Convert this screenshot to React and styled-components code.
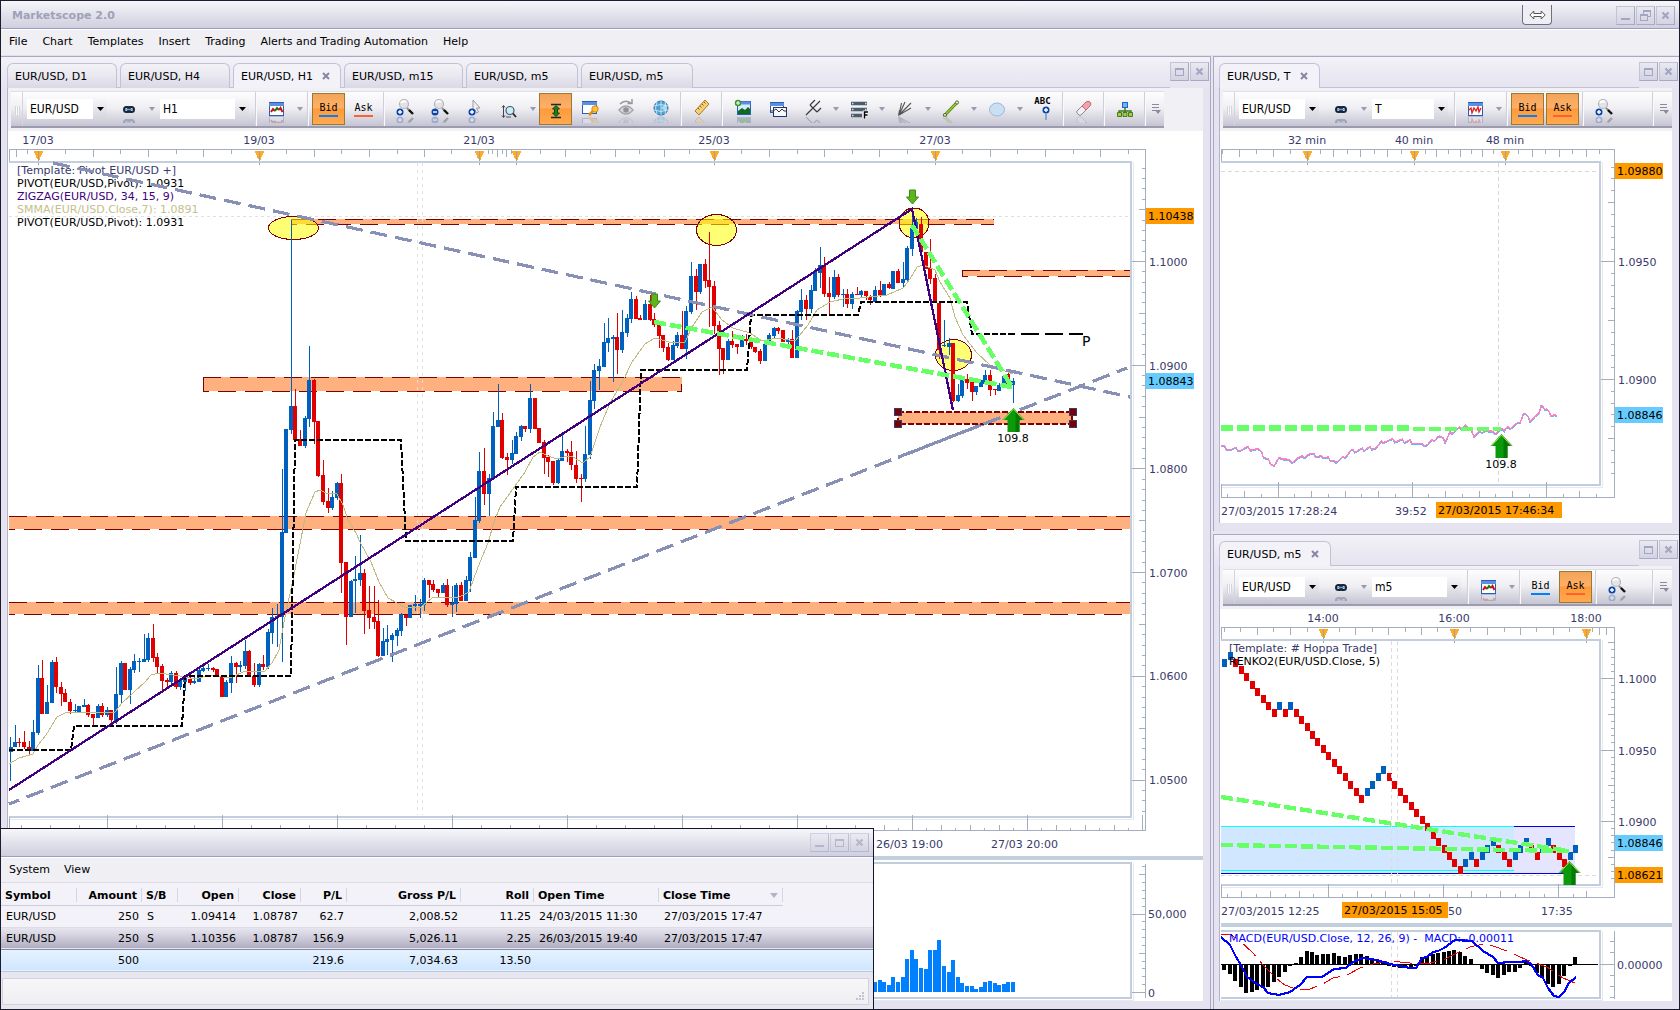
import React, { useState } from "react";
import styled, { createGlobalStyle, css } from "styled-components";

const BLUE = "#0060c0";
const RED = "#e00000";
const AXIS = "#a5aebc";
const FRAME = "#c2cedb";
const LABEL = "#39396b";
const GREEN = "#66ff66";
const MAROON = "#7d0000";
const TREND = "#8890b6";

// [high, bodyTop, bodyBottom, low, up]
const CANDLES = [
  [737, 747, 752, 781, 1], [725, 742, 747, 747, 1], [738, 742, 743, 747, 0], [731, 742, 747, 749, 0],
  [741, 747, 751, 755, 0], [720, 732, 751, 751, 1], [665, 678, 733, 735, 1], [660, 678, 714, 714, 0],
  [685, 702, 714, 714, 1], [660, 662, 703, 703, 1], [657, 662, 687, 693, 0], [682, 687, 694, 706, 0],
  [689, 693, 702, 702, 0], [699, 702, 711, 714, 0], [704, 710, 711, 713, 1], [706, 706, 712, 713, 1],
  [699, 705, 707, 707, 1], [704, 705, 715, 717, 0], [714, 714, 718, 726, 0], [704, 706, 718, 718, 1],
  [703, 706, 715, 717, 0], [707, 710, 715, 717, 1], [710, 710, 720, 723, 0], [667, 694, 721, 724, 1],
  [661, 663, 695, 703, 1], [663, 663, 690, 690, 0], [667, 669, 690, 704, 1], [654, 661, 670, 673, 1],
  [658, 661, 662, 672, 1], [634, 659, 662, 662, 1], [633, 638, 660, 662, 1], [624, 638, 658, 662, 0],
  [653, 657, 667, 673, 0], [664, 666, 681, 690, 0], [678, 680, 682, 687, 0], [671, 673, 682, 685, 1],
  [671, 673, 687, 689, 0], [678, 680, 687, 690, 1], [677, 678, 682, 691, 1], [677, 679, 683, 685, 0],
  [677, 681, 683, 684, 1], [668, 670, 682, 682, 1], [663, 668, 671, 672, 1], [664, 668, 669, 671, 1],
  [667, 668, 670, 672, 0], [669, 669, 676, 676, 0], [676, 676, 697, 697, 0], [680, 682, 697, 697, 1],
  [656, 663, 683, 693, 1], [662, 663, 667, 683, 0], [661, 665, 667, 672, 1], [640, 651, 666, 669, 1],
  [650, 651, 676, 676, 0], [663, 676, 685, 687, 0], [663, 664, 685, 687, 1], [655, 664, 667, 670, 0],
  [629, 632, 667, 669, 1], [608, 617, 633, 644, 1], [604, 616, 618, 647, 1], [469, 532, 617, 662, 1],
  [429, 429, 533, 533, 1], [220, 406, 430, 434, 1], [389, 406, 440, 441, 0], [430, 439, 446, 446, 0],
  [416, 418, 446, 448, 1], [346, 380, 419, 427, 1], [379, 380, 422, 444, 0], [421, 421, 476, 477, 0],
  [460, 475, 502, 505, 0], [488, 501, 508, 513, 0], [491, 497, 508, 510, 1], [482, 483, 498, 500, 1],
  [474, 483, 563, 593, 0], [562, 562, 617, 645, 0], [580, 581, 617, 617, 1], [556, 579, 581, 613, 1],
  [535, 573, 580, 586, 1], [569, 573, 611, 634, 0], [586, 610, 618, 629, 0], [586, 617, 622, 629, 0],
  [600, 621, 656, 657, 0], [628, 641, 656, 656, 1], [625, 639, 642, 655, 1], [633, 635, 640, 662, 1],
  [628, 630, 636, 646, 1], [613, 614, 631, 636, 1], [615, 615, 618, 626, 0], [605, 605, 618, 618, 1],
  [595, 604, 606, 611, 1], [599, 604, 606, 618, 1], [578, 580, 605, 611, 1], [580, 580, 585, 598, 0],
  [580, 584, 590, 592, 0], [589, 589, 593, 597, 0], [583, 585, 593, 593, 1], [579, 585, 605, 607, 0],
  [586, 603, 605, 617, 1], [583, 585, 604, 612, 1], [582, 585, 601, 601, 0], [576, 580, 601, 601, 1],
  [552, 557, 581, 592, 1], [497, 520, 558, 558, 1], [452, 471, 521, 523, 1], [448, 471, 494, 505, 0],
  [474, 478, 494, 516, 1], [412, 426, 479, 479, 1], [384, 420, 427, 427, 1], [413, 420, 458, 459, 0],
  [453, 457, 460, 475, 0], [440, 453, 460, 464, 1], [432, 436, 454, 454, 1], [425, 426, 437, 441, 1],
  [426, 426, 429, 432, 0], [384, 398, 429, 433, 1], [398, 398, 429, 429, 0], [428, 428, 443, 443, 0],
  [440, 442, 458, 474, 0], [455, 457, 462, 477, 0], [461, 461, 483, 485, 0], [459, 460, 483, 484, 1],
  [435, 451, 461, 461, 1], [449, 451, 453, 462, 0], [441, 452, 465, 470, 0], [451, 465, 479, 483, 0],
  [474, 478, 479, 502, 0], [426, 454, 479, 482, 1], [381, 400, 455, 459, 1], [364, 370, 401, 409, 1],
  [359, 366, 371, 390, 1], [323, 342, 367, 367, 1], [318, 338, 343, 352, 1], [335, 337, 339, 382, 1],
  [313, 337, 350, 374, 0], [310, 332, 350, 353, 1], [314, 318, 333, 337, 1], [292, 299, 319, 323, 1],
  [296, 299, 319, 319, 0], [315, 318, 320, 320, 0], [300, 304, 320, 320, 1], [295, 304, 320, 321, 0],
  [313, 319, 325, 327, 0], [325, 325, 336, 348, 0], [335, 335, 348, 352, 0], [343, 347, 360, 361, 0],
  [341, 345, 360, 360, 1], [332, 335, 346, 348, 1], [311, 335, 349, 349, 0], [306, 311, 349, 359, 1],
  [262, 276, 312, 314, 1], [269, 276, 292, 310, 0], [264, 264, 292, 294, 1], [259, 264, 281, 288, 0],
  [232, 280, 287, 327, 0], [281, 286, 326, 334, 0], [321, 325, 349, 375, 0], [348, 348, 360, 374, 0],
  [339, 341, 360, 360, 1], [331, 341, 345, 348, 0], [344, 344, 347, 354, 0], [335, 340, 347, 347, 1],
  [334, 339, 341, 345, 0], [341, 341, 347, 349, 0], [347, 347, 352, 353, 0], [349, 351, 361, 364, 0],
  [344, 344, 361, 361, 1], [333, 335, 345, 345, 1], [327, 328, 336, 338, 1], [327, 328, 331, 334, 0],
  [330, 330, 342, 342, 0], [338, 340, 342, 344, 1], [330, 339, 358, 358, 0], [310, 311, 358, 358, 1],
  [289, 300, 312, 320, 1], [295, 300, 309, 320, 0], [285, 290, 309, 313, 1], [268, 272, 291, 291, 1],
  [247, 265, 273, 288, 1], [257, 265, 294, 297, 0], [277, 293, 297, 314, 0], [270, 277, 297, 299, 1],
  [274, 277, 295, 297, 0], [289, 294, 295, 307, 1], [289, 294, 304, 308, 0], [292, 294, 304, 309, 1],
  [287, 294, 295, 295, 0], [290, 291, 295, 297, 1], [291, 291, 296, 300, 0], [295, 297, 300, 305, 0],
  [286, 290, 302, 302, 1], [281, 290, 295, 297, 0], [284, 284, 295, 295, 1], [282, 284, 288, 289, 0],
  [271, 271, 289, 289, 1], [269, 271, 283, 283, 0], [262, 279, 283, 287, 1], [246, 248, 280, 282, 1],
  [210, 228, 249, 256, 1], [218, 222, 229, 232, 1], [217, 224, 252, 252, 0], [252, 252, 269, 269, 0],
  [239, 268, 279, 284, 0], [274, 278, 303, 303, 0], [303, 303, 350, 359, 0], [320, 345, 346, 347, 1],
  [338, 343, 347, 355, 1], [343, 343, 401, 402, 0], [384, 395, 401, 402, 1], [380, 380, 396, 398, 1],
  [374, 379, 383, 389, 0], [379, 382, 392, 401, 0], [386, 386, 392, 395, 1], [380, 380, 387, 387, 1],
  [370, 375, 384, 384, 1], [370, 375, 390, 396, 0], [389, 389, 390, 395, 0], [383, 385, 391, 391, 1],
  [375, 376, 386, 386, 1], [373, 374, 384, 386, 0], [378, 381, 385, 403, 1],
];

const VOLUME = [
  982, 980, 982, 985, 977, 982, 977, 959, 950, 959, 968, 969, 950, 950, 940, 966,
  972, 960, 977, 983, 986, 986, 989, 987, 982, 981, 983, 985, 984, 982, 982,
];

const SMMA =
  "9,764 19,758 33,754 38,745 46,735 57,717 67,712 92,712 115,712 122,703 134,692 145,682 151,675 159,673 180,676 195,679 210,675 230,678 245,671 264,672 272,663 279,650 285,617 293,580 306,513 308,508 315,492 320,490 326,493 337,494 343,505 348,520 356,533 360,542 371,562 379,582 388,598 406,608 421,607 432,598 459,597 469,592 474,578 480,562 488,543 494,522 500,507 510,493 525,472 533,457 540,452 548,456 557,459 567,456 573,457 583,463 590,457 600,427 610,403 622,383 632,362 645,344 655,338 673,343 685,342 692,327 702,312 712,307 722,320 733,328 750,333 762,341 777,338 795,341 808,325 817,310 830,302 847,298 860,298 887,295 903,288 910,279 917,267 923,265 935,270 940,282 950,298 955,317 963,335 977,353 990,365 1013,374";

const PIVOT =
  "9,750 71,750 74,726 182,726 185,676 291,676 295,440 401,440 406,541 513,541 516,487 637,487 641,370 747,370 751,315 858,315 861,302 967,302 972,334 1013,334";

const TICKS_LINE = [
  [0, 76], [9, 79], [19, 79], [27, 78], [39, 81], [44, 88], [53, 95], [60, 87], [69, 92], [79, 88], [89, 84],
  [102, 87], [115, 91], [122, 88], [130, 81], [145, 79], [155, 77], [164, 70], [189, 71], [199, 75], [207, 74],
  [219, 65], [224, 71], [229, 63], [244, 56], [249, 59], [253, 66], [265, 59], [272, 63], [285, 59], [299, 53],
  [304, 42], [309, 50], [316, 46], [320, 37], [326, 39], [330, 45], [336, 46],
];

const RENKO =
  "uu" + "d".repeat(8) + "udud" + "d".repeat(12) + "uuuu" + "d".repeat(14) + "uuduuuddduuudduuddduu";

const HISTOGRAM = [
  5, 9, 16, 22, 28, 27, 25, 23, 22, 17, 12, 7, 1, -1, -7, -13, -12, -9, -10, -10, -11, -8, -7, -9, -10, -10, -8,
  -4, -3, -2, 1, 2, 3, 3, 3, 1, -7, -8, -10, -11, -12, -13, -14, -12, -8, -5, 0, 4, 8, 10, 13, 10, 7, 7, 3, -2,
  1, 8, 12, 19, 22, 19, 11, 1, -7,
];

const MACD_LINE =
  "1221,937 1230,945 1236,957 1241,965 1247,977 1257,984 1263,987 1268,993 1279,995 1290,992 1300,985 1307,977 1322,977 1334,969 1346,968 1353,962 1363,958 1377,960 1390,964 1400,966 1410,968 1416,968 1422,958 1427,957 1433,952 1438,951 1444,948 1455,940 1472,941 1483,951 1493,957 1498,963 1510,962 1520,962 1526,961 1531,964 1538,975 1543,978 1548,988 1554,996 1559,997 1564,992 1569,983 1576,977";
const SIGNAL_LINE =
  "1221,934 1230,934 1240,941 1253,953 1263,965 1277,979 1285,985 1298,990 1310,989 1323,984 1333,978 1347,975 1360,968 1373,964 1390,961 1410,963 1430,963 1443,960 1457,953 1470,947 1483,944 1493,946 1507,951 1527,960 1547,967 1563,978 1575,983";

const TRADES = [
  ["EUR/USD", "250", "S", "1.09414", "1.08787", "62.7", "2,008.52", "11.25", "24/03/2015 11:30", "27/03/2015 17:47"],
  ["EUR/USD", "250", "S", "1.10356", "1.08787", "156.9", "5,026.11", "2.25", "26/03/2015 19:40", "27/03/2015 17:47"],
];

const COLUMNS = [
  { name: "Symbol", width: 76 },
  { name: "Amount", width: 65, right: true },
  { name: "S/B", width: 36 },
  { name: "Open", width: 61, right: true },
  { name: "Close", width: 62, right: true },
  { name: "P/L", width: 46, right: true },
  { name: "Gross P/L", width: 114, right: true },
  { name: "Roll", width: 73, right: true },
  { name: "Open Time", width: 125 },
  { name: "Close Time", width: 124, sorted: true },
];

/* ---------- chart parts ---------- */

const Poly = (props) => <polyline fill="none" {...props} />;

const ticksDown = (xs, y, len) => xs.map((x) => `M${x} ${y}v${len}`).join("");

const VAxis = ({ x, top, bottom, zero, step, from, to }) => {
  let d = `M${x} ${top}V${bottom}`;
  for (let k = from; k <= to; k++) {
    const len = k % 10 === 0 ? 14 : k % 5 === 0 ? 7 : 4;
    d += `M${x} ${Math.round(zero + k * step) + 0.5}h${-len}`;
  }
  return <path d={d} stroke={AXIS} fill="none" />;
};

const TopRuler = ({ left, right, y, small, large, marks }) => (
  <>
    <path
      d={`M${left} ${y + 13}V${y}H${right}` + ticksDown(small, y, 4) + ticksDown(large, y, 7)}
      stroke={AXIS}
      fill="none"
    />
    {marks.map((m) => (
      <g key={m}>
        <path d={`M${m - 5} ${y + 1}h10l-3 7l-2 4l-2 -4z`} fill="#ffab26" />
        <path d={`M${m} ${y + 1}v14`} stroke="#a8a090" />
      </g>
    ))}
  </>
);

const Frame = ({ left, right, top, bottom }) => (
  <>
    <path d={`M${left} ${top}H${right}V${bottom}H${left}`} stroke={FRAME} strokeWidth="2" fill="none" />
    <path d={`M${left} ${bottom + 2}H${right + 2}V${top}`} stroke="#e6e9ef" fill="none" />
  </>
);

const PriceTag = ({ x, y, w = 48, fill, children }) => (
  <>
    <rect x={x} y={y} width={w} height="16" fill={fill} />
    <text x={x + 2} y={y + 12} fill="#000">
      {children}
    </text>
  </>
);

const Band = ({ x1, x2, y1, y2 }) => (
  <>
    <rect x={x1} y={y1} width={x2 - x1} height={y2 - y1} fill="#ffb07f" />
    <path d={`M${x1} ${y1 + 0.5}H${x2}`} stroke={MAROON} strokeDasharray="18 9" />
    <path d={`M${x1} ${y2 + 0.5}H${x2}`} stroke={MAROON} strokeDasharray="18 9" strokeDashoffset="12" />
  </>
);

const SellArrow = ({ x, y }) => (
  <path
    d={`M${x - 3} ${y}h6v7h3l-6 7l-6 -7h3z`}
    fill="#5ab51e"
    stroke="#3c8a10"
    shapeRendering="auto"
  />
);

const BuyArrow = ({ x, y }) => (
  <g shapeRendering="auto">
    <path d={`M${x} ${y}l11 12h-5v12h-12v-12h-5z`} fill="#0a9a0a" />
    <path d={`M${x + 2} ${y + 3}l9 9h-5v12h-4z`} fill="#067806" />
    <path d={`M${x - 10} ${y + 12}l10 -11l10 11`} fill="none" stroke="#a6e04a" />
  </g>
);

const range = (from, to, step) => {
  const out = [];
  for (let v = from; v <= to; v += step) out.push(Math.round(v) + 0.5);
  return out;
};

const MainChart = () => (
  <Chart viewBox="8 131 1195 870">
    {[
      ["17/03", 38], ["19/03", 259], ["21/03", 479], ["25/03", 714], ["27/03", 935],
    ].map(([t, x]) => (
      <text key={t} x={x} y="144" textAnchor="middle">{t}</text>
    ))}
    <TopRuler
      left={9.5}
      right={1145.5}
      y={149.5}
      marks={[38.5, 259.5, 479.5, 516.5, 714.5, 935.5]}
      large={[16.5, 93.5, 148.5, 203.5, 314.5, 369.5, 424.5, 565.5, 615.5, 664.5, 769.5, 824.5, 879.5, 990.5, 1045.5, 1100.5, 497.5, 506.5]}
      small={[27.5, 65.5, 120.5, 176.5, 231.5, 286.5, 341.5, 397.5, 451.5, 488.5, 492.5, 502.5, 511.5, 540.5, 590.5, 639.5, 689.5, 741.5, 797.5, 852.5, 907.5, 962.5, 1017.5, 1073.5, 1128.5]}
    />
    <Frame left={9} right={1131} top={162} bottom={817} />
    <path d="M9 216.5H1131" stroke="#e0e0e0" strokeDasharray="3 3" />

    <text x="17" y="174">[Template: Pivot EUR/USD +]</text>
    <text x="17" y="187" fill="#000">PIVOT(EUR/USD,Pivot): 1.0931</text>
    <text x="17" y="200" fill="#400080">ZIGZAG(EUR/USD, 34, 15, 9)</text>
    <text x="17" y="213" fill="#c5c08c">SMMA(EUR/USD.Close,7): 1.0891</text>
    <text x="17" y="226" fill="#000">PIVOT(EUR/USD,Pivot): 1.0931</text>

    <Band x1={291} x2={994} y1={219} y2={224} />
    <Band x1={203} x2={682} y1={377} y2={391} />
    <Band x1={9} x2={1130} y1={516} y2={529} />
    <Band x1={9} x2={1130} y1={602} y2={614} />
    <Band x1={962} x2={1130} y1={270} y2={276} />
    <path d="M203.5 377V391M681.5 384V391M962.5 270V277" stroke={MAROON} />
    <path d="M417.5 163V815M422.5 163V815" stroke="#e0e0e0" strokeDasharray="3 4" />

    <g fill="#ffff00" fillOpacity="0.55" stroke={MAROON}>
      <ellipse cx="293.5" cy="228" rx="25" ry="11.5" />
      <ellipse cx="716.5" cy="230" rx="20" ry="15.5" />
      <ellipse cx="914" cy="223" rx="15" ry="15" />
      <ellipse cx="953.5" cy="355" rx="18" ry="15.5" />
    </g>

    {CANDLES.map(([high, top, bottom, low, up], i) => {
      const x = Math.round(10.2 + i * 4.6);
      const fill = up ? BLUE : RED;
      return (
        <g key={i} fill={fill}>
          <rect x={x} y={high} width="1" height={Math.max(low - high, 1)} />
          <rect x={x - (i ? 2 : 1)} y={top} width="4" height={Math.max(bottom - top, 1)} />
        </g>
      );
    })}

    <Poly points={SMMA} stroke="#bfbb80" />
    <Poly points={PIVOT} stroke="#000" strokeWidth="2" strokeDasharray="6 2" />
    <path d="M1013 334H1083" stroke="#000" strokeWidth="2" strokeDasharray="18 6" strokeDashoffset="16" />
    <path d="M53 163L1130 397" stroke={TREND} strokeWidth="3.2" strokeDasharray="17 8" />
    <path d="M9 804L1127 368" stroke={TREND} strokeWidth="3.2" strokeDasharray="18 8" strokeDashoffset="7" />
    <Poly points="9,790 912,209 953,410" stroke="#400080" strokeWidth="2.3" />
    <path d="M654 322L1012 387" stroke={GREEN} strokeWidth="4.6" strokeDasharray="12 4" />
    <path d="M912 225L1012 387" stroke={GREEN} strokeWidth="4.6" strokeDasharray="12 4" />
    <text x="1082" y="346" fontSize="14" fill="#000">P</text>
    <SellArrow x={912.5} y={190} />
    <SellArrow x={654.5} y={294} />

    <rect x="898" y="412" width="174" height="12" fill="#ffb07f" stroke={MAROON} strokeWidth="2" strokeDasharray="6 2" />
    <path d="M898 457.500L1012 413" stroke={TREND} strokeWidth="3.2" strokeDasharray="18 8" strokeDashoffset="12" />
    {[[898, 412], [1073, 412], [898, 424], [1073, 424]].map(([x, y]) => (
      <rect key={`${x}-${y}`} x={x - 3.5} y={y - 3.5} width="7" height="7" fill={MAROON} stroke="#3a3a70" />
    ))}
    <BuyArrow x={1013.5} y={408} />
    <text x="1013" y="442" textAnchor="middle" fill="#000">109.8</text>

    <VAxis x={1145.5} top={149} bottom={831} zero={261} step={10.37} from={-9} to={53} />
    {["1.1000", "1.0900", "1.0800", "1.0700", "1.0600", "1.0500"].map((t, i) => (
      <text key={t} x="1149" y={Math.round(266 + i * 103.6)}>{t}</text>
    ))}
    <PriceTag x={1146} y={208} fill="#ff9900">1.10438</PriceTag>
    <PriceTag x={1146} y={373} fill="#66ccff">1.08843</PriceTag>

    <path
      d={
        "M9 830.5H1146M9.5 817V830" +
        ticksDown(range(107, 1143, 115), 815, 15) +
        ticksDown(range(21, 1130, 28.75), 825, 5) +
        ticksDown(range(35, 1130, 28.75), 828, 2)
      }
      stroke={AXIS}
      fill="none"
    />
    <text x="876" y="848">26/03 19:00</text>
    <text x="991" y="848">27/03 20:00</text>
    <rect x="9" y="856" width="1194" height="4" fill="#c2cfdc" />

    <Frame left={9} right={1131} top={863} bottom={998} />
    {VOLUME.map((top, i) => (
      <rect key={i} x={Math.round(10.2 + (i + 188) * 4.6) - 2} y={top} width="4" height={992 - top} fill="#0080ff" />
    ))}
    <VAxis x={1145.5} top={864} bottom={998} zero={992} step={7.85} from={-16} to={0} />
    <text x="1148" y="918">50,000</text>
    <text x="1148" y="997">0</text>
  </Chart>
);

const tickPoints = () => {
  const out = [];
  TICKS_LINE.forEach(([x, y], i) => {
    const next = TICKS_LINE[i + 1];
    if (!next) return;
    const steps = Math.max(1, Math.round((next[0] - x) / 2));
    for (let s = 0; s < steps; s++) {
      const wave = [0, 1.6, -1, 1, -1.6][(i * 3 + s * 2) % 5];
      out.push([1221 + x + ((next[0] - x) * s) / steps, 370 + y + ((next[1] - y) * s) / steps + wave]);
    }
  });
  out.push([1557, 416]);
  return out;
};

const TickChart = () => {
  const pts = tickPoints();
  return (
    <Chart viewBox="1220 131 452 392">
      {[["32 min", 1307], ["40 min", 1414], ["48 min", 1505]].map(([t, x]) => (
        <text key={t} x={x} y="144" textAnchor="middle">{t}</text>
      ))}
      <TopRuler
        left={1221.5}
        right={1614.5}
        y={149.5}
        marks={[1307.5, 1414.5, 1505.5]}
        large={[1239.5, 1273.5, 1333.5, 1360.5, 1387.5, 1436.5, 1460.5, 1482.5, 1532.5, 1559.5, 1586.5]}
        small={[1222.5, 1256.5, 1290.5, 1320.5, 1347.5, 1374.5, 1401.5, 1425.5, 1448.5, 1471.5, 1493.5, 1518.5, 1545.5, 1572.5, 1599.5]}
      />
      <Frame left={1221} right={1600} top={162} bottom={485} />
      <path d="M1221 171.5H1598M1498.5 163V483" stroke="#d8d8d8" strokeDasharray="4 3" />
      <Poly points={pts.map(([x, y]) => `${x},${y + 1}`).join(" ")} stroke="#66b3ff" />
      <Poly points={pts.map((p) => p.join(",")).join(" ")} stroke="#ff80c0" strokeWidth="1.3" />
      <path d="M1221 428H1410" stroke={GREEN} strokeWidth="6" strokeDasharray="12 4" />
      <path d="M1413 429H1501" stroke={GREEN} strokeWidth="4" strokeDasharray="12 4" />
      <BuyArrow x={1501.5} y={434} />
      <text x="1501" y="468" textAnchor="middle" fill="#000">109.8</text>
      <VAxis x={1614.5} top={149} bottom={498} zero={261} step={11.8} from={-8} to={18} />
      <text x="1618" y="266">1.0950</text>
      <text x="1618" y="384">1.0900</text>
      <PriceTag x={1615} y={163} fill="#ff9900">1.09880</PriceTag>
      <PriceTag x={1615} y={407} fill="#66ccff">1.08846</PriceTag>
      <path
        d={
          "M1221 497.5H1615M1221.5 484V497" +
          ticksDown([1278.5, 1412.5, 1546.5], 482, 15) +
          ticksDown([1244.5, 1311.5, 1345.5, 1378.5, 1445.5, 1479.5, 1512.5, 1579.5], 491, 6) +
          ticksDown(range(1227, 1600, 16.78 * 2), 494, 3)
        }
        stroke={AXIS}
        fill="none"
      />
      <text x="1221" y="515">27/03/2015 17:28:24</text>
      <text x="1395" y="515">39:52</text>
      <PriceTag x={1436} y={502} w={126} fill="#ff9900">27/03/2015 17:46:34</PriceTag>
    </Chart>
  );
};

const RenkoChart = () => {
  let level = 2;
  const brickX = (i) => Math.round(1222.3 + i * 5.48);
  return (
    <Chart viewBox="1220 609 452 392">
      {[["14:00", 1323], ["16:00", 1454], ["18:00", 1586]].map(([t, x]) => (
        <text key={t} x={x} y="622" textAnchor="middle">{t}</text>
      ))}
      <TopRuler
        left={1221.5}
        right={1614.5}
        y={627.5}
        marks={[1323.5, 1454.5, 1586.5]}
        large={[1257.5, 1290.5, 1355.5, 1388.5, 1421.5, 1487.5, 1520.5, 1553.5, 1599.5, 1606.5]}
        small={[1224.5, 1240.5, 1273.5, 1307.5, 1339.5, 1372.5, 1405.5, 1437.5, 1470.5, 1504.5, 1536.5, 1569.5, 1592.5]}
      />
      <rect x="1221" y="826" width="293" height="48" fill="#d0e7ff" />
      <rect x="1514" y="826" width="61" height="48" fill="#e5e5ff" />
      <path d="M1221 826.5H1514M1221 870.5H1514" stroke="#00ffff" />
      <path d="M1514 826.5H1575M1221 873.5H1575" stroke="#0000e0" />
      <Frame left={1221} right={1600} top={640} bottom={885} />
      <text x="1229" y="652">[Template: # Hoppa Trade]</text>
      {RENKO.split("").map((dir, i) => {
        level += dir === "u" ? -1 : 1;
        return (
          <rect
            key={i}
            x={brickX(i)}
            y={Math.round(652 + level * 7.14)}
            width="5"
            height="8"
            fill={dir === "u" ? BLUE : RED}
          />
        );
      })}
      <text x="1229" y="665" fill="#000">RENKO2(EUR/USD.Close, 5)</text>
      <path d="M1391.5 641V884M1397.5 641V884M1221 875.5H1598M1391.5 932V998M1397.5 932V998" stroke="#dcdcdc" strokeDasharray="4 3" />
      <path d="M1221 797L1569 851" stroke={GREEN} strokeWidth="4.4" strokeDasharray="12 4" />
      <path d="M1221 845L1569 851" stroke={GREEN} strokeWidth="4.4" strokeDasharray="12 4" />
      <BuyArrow x={1569.5} y={861} />
      <VAxis x={1614.5} top={627} bottom={898} zero={678} step={7.15} from={-5} to={28} />
      <text x="1618" y="683">1.1000</text>
      <text x="1618" y="755">1.0950</text>
      <text x="1618" y="826">1.0900</text>
      <PriceTag x={1615} y={835} fill="#66ccff">1.08846</PriceTag>
      <PriceTag x={1615} y={867} fill="#ff9900">1.08621</PriceTag>
      <path
        d={
          "M1221 897.5H1615M1221.5 885V897" +
          ticksDown([1328.5, 1443.5, 1558.5], 884, 13) +
          ticksDown([1241.5, 1270.5, 1299.5, 1357.5, 1385.5, 1414.5, 1471.5, 1500.5, 1529.5, 1586.5], 891, 6) +
          ticksDown(range(1227, 1575, 28.8), 894, 3)
        }
        stroke={AXIS}
        fill="none"
      />
      <text x="1221" y="915">27/03/2015 12:25</text>
      <text x="1448" y="915">50</text>
      <text x="1541" y="915">17:35</text>
      <PriceTag x={1342} y={902} w={106} fill="#ff9900">27/03/2015 15:05</PriceTag>
      <rect x="1221" y="923" width="451" height="4" fill="#c2cfdc" />

      <Frame left={1221} right={1600} top={931} bottom={998} />
      <path d="M1221 964.5H1598" stroke="#000" />
      {HISTOGRAM.map((v, i) => (
        <rect key={i} x={brickX(i)} y={v > 0 ? 964 : 964 + v} width="4" height={Math.abs(v) + 1} fill="#000" />
      ))}
      <Poly points={SIGNAL_LINE} stroke="#f00000" strokeDasharray="18 7" />
      <Poly points={MACD_LINE} stroke="#0000ff" strokeWidth="2.2" />
      <text x="1229" y="942" fill="#0000ff">
        MACD(EUR/USD.Close, 12, 26, 9) -{"\u00a0 "}MACD: -0.00011
      </text>
      <path d="M1614.5 931V999M1610 941.5h4M1610 952.5h4M1600 964.5h14M1610 975.5h4M1610 986.5h4M1610 997.5h4" stroke={AXIS} />
      <text x="1617" y="969">0.00000</text>
    </Chart>
  );
};

/* ---------- icons ---------- */

const Glyph = ({ children, flat }) => (
  <svg width="24" height="28" viewBox="0 0 24 28" fill="none" aria-hidden="true">
    {children}
    {!flat && (
      <g transform="matrix(1 0 0 -1 0 42)" opacity="0.25">
        {children}
      </g>
    )}
  </svg>
);

const Plus = ({ minus, x = 7, y = 17, fill = "#0a46a8" }) => (
  <>
    <circle cx={x} cy={y} r="3.5" fill={fill} />
    <path d={`M${x - 2} ${y}h4` + (minus ? "" : `M${x} ${y - 2}v4`)} stroke="#fff" strokeWidth="1.4" />
  </>
);

const Lens = () => (
  <>
    <path d="M14 13l3 3" stroke="#888" strokeWidth="2" />
    <path d="M16 15l4 4" stroke="#111" strokeWidth="2.4" />
    <circle cx="11" cy="9" r="4.5" fill="#e2e3e6" stroke="#b4b4b8" strokeWidth="1.2" />
    <path d="M8 8q2-3 5-1" stroke="#fff" strokeWidth="2" />
  </>
);

const WinBox = ({ x = 4, y = 6, w = 15, h = 14 }) => (
  <>
    <rect x={x + 0.5} y={y + 0.5} width={w - 1} height={h - 1} fill="#fff" stroke="#2c5fb4" />
    <rect x={x} y={y} width={w} height="4" fill="#5a90e4" />
    <path d={`M${x} ${y + 0.5}h${w}`} stroke="#2c5fb4" />
  </>
);

const ICONS = {
  link: (
    <>
      <rect x="7" y="12" width="6" height="5" rx="2.5" stroke="#16243a" strokeWidth="2" />
      <rect x="11" y="12" width="6" height="5" rx="2.5" stroke="#16243a" strokeWidth="2" />
      <path d="M8 14.500h8" stroke="#6f9cc8" strokeWidth="1.5" />
    </>
  ),
  chart: (
    <>
      <WinBox y={7} />
      <path d="M6 17l2-3l2 2" stroke="#d01010" strokeWidth="2" />
      <path d="M10 16l2-3l2 2" stroke="#108010" strokeWidth="2" />
      <path d="M14 15l1.500-2l2 4" stroke="#d01010" strokeWidth="2" />
    </>
  ),
  tickChart: (
    <>
      <WinBox y={7} />
      <path d="M5 15l2-2l1 5l2-5l2 3l2-4l1 5l2-4" stroke="#e02020" strokeWidth="1.3" />
    </>
  ),
  zoomIn: (
    <>
      <Lens />
      <Plus />
    </>
  ),
  zoomOut: (
    <>
      <Lens />
      <Plus minus />
    </>
  ),
  pointer: (
    <>
      <path d="M10 5l7 8h-3.500l2 4l-2 1l-2-4l-1.500 2z" fill="#eef0f3" stroke="#9a9aa2" />
      <Plus x={9} />
    </>
  ),
  range: (
    <>
      <path d="M5.500 11v11M4 12.500l1.500-2l1.500 2M4 20.500l1.500 2l1.500-2" stroke="#444" />
      <circle cx="12" cy="15.500" r="4" fill="#cfeaf4" stroke="#33606e" strokeWidth="1.2" />
      <path d="M15 18.500l3 3.500" stroke="#222" strokeWidth="1.8" />
      <path d="M8 22h5" stroke="#555" />
    </>
  ),
  fit: (
    <>
      <path d="M7 9.500h10M7 22.500h10" stroke="#1b2b2b" strokeWidth="1.5" />
      <path d="M12 10.500l3.500 3.500h-2v4h2l-3.500 3.500l-3.500-3.500h2v-4h-2z" fill="#18801c" stroke="#0c4a10" />
    </>
  ),
  windowKey: (
    <>
      <WinBox x={3} y={6} w={15} h={13} />
      <path d="M10 20l5-5" stroke="#e08a10" strokeWidth="2.6" />
      <circle cx="16" cy="14" r="3.2" fill="#ffc03a" stroke="#d98a10" />
    </>
  ),
  eye: (
    <>
      <path d="M5 15q7-8 14 0q-7 8-14 0z" fill="#dcdce0" stroke="#a4a4aa" strokeWidth="1.5" />
      <circle cx="12" cy="15" r="2.8" fill="#90909a" />
      <path d="M6 9q5-5 11-1M18 4v4.500h-4.500" stroke="#98989e" strokeWidth="1.5" />
    </>
  ),
  globe: (
    <>
      <circle cx="12" cy="13" r="7" fill="#4aa0d4" stroke="#2c6c9c" />
      <path d="M5 11q7-3 14 0M5 15q7 3 14 0M12 6v14M8 7q-3 6 0 12M16 7q3 6 0 12" stroke="#bfe2f4" />
      <path d="M12 13l5-5v9z" fill="#d2effa" opacity=".7" />
    </>
  ),
  ruler: (
    <>
      <path d="M5 16l10-11l4 4l-10 11z" fill="#f4d078" stroke="#a97a1a" />
      <path d="M8 13l1.500 1.500M10 11l1.500 1.500M12 9l1.500 1.500M14 7l1.500 1.500" stroke="#8a5f10" />
    </>
  ),
  picture: (
    <>
      <rect x="6.500" y="6.500" width="13" height="13" fill="#d6ebff" stroke="#2c5fb4" />
      <path d="M6.500 8h13" stroke="#5a90e4" strokeWidth="3" />
      <path d="M7 19v-3l4-3l3 2l3-3l2 2v5z" fill="#0d6a22" />
      <circle cx="7" cy="8" r="3.2" fill="#3a9a2a" />
      <path d="M5 8h4M7 6v4" stroke="#fff" />
    </>
  ),
  cards: (
    <>
      <WinBox x={4} y={7} w={14} h={11} />
      <rect x="7.500" y="12.500" width="13" height="9" fill="#f4f7fc" stroke="#22346a" />
      <path d="M4 16h3l3-2l3 3l3-3l2 2h3" stroke="#333" />
    </>
  ),
  fork: (
    <path d="M5 20l7-7M9 10l7 7M9 10l5-5M12 13l7-7M16 17l4-4" stroke="#3c3c3c" strokeWidth="1.2" />
  ),
  lines: (
    <>
      <path d="M4 8.500h16M4 14.500h16M4 20.500h11" stroke="#4c5c68" strokeWidth="3.4" />
      <path d="M5 8.500h1.500M18 8.500h1.500M5 14.500h1.500M18 14.500h1.500M5 20.500h1.500" stroke="#cfd8de" strokeWidth="1.4" />
      <path d="M17.500 23.500v-6.500h3.500M17.500 20h3" stroke="#fff" strokeWidth="3" />
      <path d="M17.500 23.500v-6.500h3.500M17.500 20h3" stroke="#000" strokeWidth="1.5" />
    </>
  ),
  fan: (
    <>
      <path d="M6 20l2.500-12M6 20l6-13M6 20l12-12M6 20l12-7" stroke="#5a5a5a" strokeWidth="1.2" />
      <path d="M5 21l1-6l4 3z" fill="#555" />
    </>
  ),
  line: (
    <>
      <path d="M6.500 19.500l11-11.500" stroke="#4a7a10" strokeWidth="3" />
      <path d="M6.500 19.500l11-11.500" stroke="#9ccc20" strokeWidth="1.6" />
      <circle cx="6" cy="20" r="1.6" fill="#e8e8d8" stroke="#5a6a30" />
      <circle cx="18" cy="7.500" r="1.6" fill="#e8e8d8" stroke="#5a6a30" />
    </>
  ),
  ellipse: <ellipse cx="12" cy="14.500" rx="7.5" ry="6.5" fill="#c9dff3" stroke="#9ab8d8" />,
  eraser: (
    <>
      <path d="M5 16l5-5l4 4l-5 5q-1 .5-2 0l-2-2q-.5-1 0-2z" fill="#f0f0f4" stroke="#8a8a90" />
      <path d="M10 11l4-4q2-1.500 4 0q2 2 0 4l-4 4z" fill="#f0a4aa" stroke="#c86a72" />
    </>
  ),
  tree: (
    <>
      <path d="M12 10v7M6 18v-2h12v2" stroke="#3a7a1c" strokeWidth="1.4" />
      <rect x="9.500" y="7.500" width="5" height="5" fill="#6ab4f4" stroke="#1c68c0" />
      <path d="M4.500 17.500h4v4h-4zM10 17.500h4v4h-4zM15.500 17.500h4v4h-4z" fill="#a4cc4a" stroke="#4a7a1c" />
    </>
  ),
};

const Cross = () => (
  <svg width="8" height="8" viewBox="0 0 8 8" aria-hidden="true">
    <path d="M1 1l6 6M7 1l-6 6" stroke="currentColor" strokeWidth="2" />
  </svg>
);

const WINDOW_GLYPHS = {
  minimize: <path d="M2 9h9v2h-9z" fill="currentColor" />,
  maximize: <path d="M2 3h9v8h-9zM3 5v5h7v-5z" fill="currentColor" fillRule="evenodd" />,
  restore: (
    <path
      d="M4 1h8v7h-3v4h-8v-7h3zM5 3v2h4v2h2v-4zM2 7v4h6v-4z"
      fill="currentColor"
      fillRule="evenodd"
    />
  ),
  close: <path d="M3.500 3.500l6 6M9.500 3.500l-6 6" stroke="currentColor" strokeWidth="2.2" />,
};

const WindowButton = ({ kind }) => (
  <FrameButton type="button" aria-label={kind}>
    <svg width="13" height="13" viewBox="0 0 13 13" aria-hidden="true">
      {WINDOW_GLYPHS[kind]}
    </svg>
  </FrameButton>
);

/* ---------- toolbar ---------- */

const Combo = ({ label, value, width }) => (
  <ComboBox $width={width}>
    <ComboSelect aria-label={label} defaultValue={value}>
      <option>{value}</option>
    </ComboSelect>
    <ComboArrow>
      <svg width="7" height="4" viewBox="0 0 7 4" aria-hidden="true">
        <path d="M0 0h7l-3.500 4z" fill="#000" />
      </svg>
    </ComboArrow>
  </ComboBox>
);

const Tool = ({ name, active, flat }) => (
  <ToolButton type="button" aria-label={name} $active={active}>
    <Glyph flat={flat}>{ICONS[name]}</Glyph>
  </ToolButton>
);

const Drop = () => (
  <DropButton type="button" aria-label="More">
    <svg width="6" height="4" viewBox="0 0 6 4" aria-hidden="true">
      <path d="M0 0h6l-3 4z" fill="#9a9ab0" />
    </svg>
  </DropButton>
);

const Overflow = () => (
  <OverflowButton type="button" aria-label="Toolbar options">
    <svg width="9" height="10" viewBox="0 0 9 10" aria-hidden="true">
      <path d="M0 .5h7M0 3.500h7M0 6.500h4" stroke="#8a8a9c" />
      <path d="M3 6h6l-3 4z" fill="#8a8a9c" />
    </svg>
  </OverflowButton>
);

const Toolbar = ({ period, periodWidth = 89, chartIcon = "chart", bid, ask, full }) => {
  const [prices, setPrices] = useState({ bid, ask });
  const toggle = (side) => setPrices({ ...prices, [side]: !prices[side] });

  return (
    <ToolbarArea>
      <ToolbarBox $full={full}>
        <Grip />
        <Combo label="Symbol" value="EUR/USD" width={80} />
        <LinkGroup>
          <Tool name="link" />
          <Drop />
        </LinkGroup>
        <Combo label="Period" value={period} width={periodWidth} />
        <Gap />
        <Separator />
        <Tool name={chartIcon} />
        <Drop />
        <Separator />
        <PriceButton type="button" $active={prices.bid} $line="#0080ff" onClick={() => toggle("bid")}>
          <span>Bid</span>
        </PriceButton>
        <PriceButton type="button" $active={prices.ask} $line="#ff6030" onClick={() => toggle("ask")}>
          <span>Ask</span>
        </PriceButton>
        <Separator />
        <Tool name="zoomIn" />
        {full && (
          <>
            <Tool name="zoomOut" />
            <Tool name="pointer" />
            <Tool name="range" flat />
            <Drop />
            <Tool name="fit" active flat />
            <Tool name="windowKey" />
            <Tool name="eye" />
            <Tool name="globe" />
            <Separator />
            <Tool name="ruler" />
            <Separator />
            <Tool name="picture" />
            <Tool name="cards" flat />
            <Tool name="fork" />
            <Drop />
            <Tool name="lines" flat />
            <Drop />
            <Tool name="fan" />
            <Drop />
            <Tool name="line" />
            <Drop />
            <Tool name="ellipse" flat />
            <Drop />
            <TextTool type="button">
              ABC
              <svg width="10" height="14" viewBox="0 0 10 14" aria-hidden="true">
                <Plus x={5} y={4} />
                <path d="M5 8v6" stroke="#8fa6cc" strokeWidth="2" />
              </svg>
            </TextTool>
            <Separator />
            <Tool name="eraser" />
            <Separator />
            <Tool name="tree" flat />
          </>
        )}
        <Spacer />
        <Separator />
        <Overflow />
      </ToolbarBox>
    </ToolbarArea>
  );
};

const TabStrip = ({ tabs, active }) => {
  const [current, setCurrent] = useState(active);
  return (
    <Strip>
      <TabList role="tablist">
        {tabs.map((t, i) => (
          <Tab key={i} $active={i === current} $width={t.width}>
            <TabButton type="button" role="tab" aria-selected={i === current} onClick={() => setCurrent(i)}>
              {t.name}
            </TabButton>
            {i === current && (
              <TabClose type="button" aria-label="Close tab">
                <Cross />
              </TabClose>
            )}
          </Tab>
        ))}
      </TabList>
      <StripButtons>
        <WindowButton kind="maximize" />
        <WindowButton kind="close" />
      </StripButtons>
    </Strip>
  );
};

const TradesWindow = () => (
  <Floating>
    <FloatTitle>
      <WindowButton kind="minimize" />
      <WindowButton kind="maximize" />
      <WindowButton kind="close" />
    </FloatTitle>
    <FloatMenu>
      <MenuButton type="button">System</MenuButton>
      <MenuButton type="button">View</MenuButton>
    </FloatMenu>
    <Table>
      <colgroup>
        {COLUMNS.map((c) => (
          <Col key={c.name} $width={c.width} />
        ))}
        <col />
      </colgroup>
      <thead>
        <tr>
          {COLUMNS.map((c) => (
            <Th key={c.name} scope="col">
              <HeadCell $right={c.right}>
                {c.name}
                {c.sorted && (
                  <svg width="8" height="5" viewBox="0 0 8 5" aria-hidden="true">
                    <path d="M0 0h8l-4 5z" fill="#b4b4c8" />
                  </svg>
                )}
              </HeadCell>
            </Th>
          ))}
          <td />
        </tr>
      </thead>
      <tbody>
        {TRADES.map((row, r) => (
          <Row key={r} $selected={r === 1}>
            {row.map((v, i) => (
              <Td key={i} $right={COLUMNS[i].right}>{v}</Td>
            ))}
            <td />
          </Row>
        ))}
      </tbody>
      <tfoot>
        <TotalRow>
          {["", "500", "", "", "", "219.6", "7,034.63", "13.50", "", ""].map((v, i) => (
            <Td key={i} $right={COLUMNS[i].right}>{v}</Td>
          ))}
          <td />
        </TotalRow>
      </tfoot>
    </Table>
    <StatusBar>
      <svg width="9" height="9" viewBox="0 0 9 9" aria-hidden="true">
        <path d="M6 0h2v2h-2zM6 3h2v2h-2zM3 3h2v2h-2zM6 6h2v2h-2zM3 6h2v2h-2zM0 6h2v2h-2z" fill="#c4c4d0" />
      </svg>
    </StatusBar>
  </Floating>
);

const App = () => (
  <React.Fragment>
    <GlobalStyle />
    <Window>
      <TitleBar>
        <Title>Marketscope 2.0</Title>
        <Detach type="button" aria-label="Resize">
          <svg width="17" height="10" viewBox="0 0 17 10" aria-hidden="true">
            <path d="M.8 5l4-4v2.500h7.400v-2.500l4 4l-4 4v-2.500h-7.400v2.500z" fill="#fff" stroke="#555" />
          </svg>
        </Detach>
        <WindowButton kind="minimize" />
        <WindowButton kind="restore" />
        <WindowButton kind="close" />
      </TitleBar>
      <MenuBar>
        {["File", "Chart", "Templates", "Insert", "Trading", "Alerts and Trading Automation", "Help"].map((m) => (
          <MenuButton key={m} type="button">{m}</MenuButton>
        ))}
      </MenuBar>
      <Workspace>
        <Panel $main>
          <TabStrip
            active={2}
            tabs={[
              { name: "EUR/USD, D1", width: 110 },
              { name: "EUR/USD, H4", width: 110 },
              { name: "EUR/USD, H1", width: 108 },
              { name: "EUR/USD, m15", width: 119 },
              { name: "EUR/USD, m5", width: 112 },
              { name: "EUR/USD, m5", width: 112 },
            ]}
          />
          <PanelBody>
            <Toolbar period="H1" bid full />
            <MainChart />
          </PanelBody>
        </Panel>
        <SideColumn>
          <Panel>
            <TabStrip active={0} tabs={[{ name: "EUR/USD, T", width: 101 }]} />
            <PanelBody>
              <Toolbar period="T" periodWidth={76} chartIcon="tickChart" bid ask />
              <TickChart />
            </PanelBody>
          </Panel>
          <Panel>
            <TabStrip active={0} tabs={[{ name: "EUR/USD, m5", width: 112 }]} />
            <PanelBody>
              <Toolbar period="m5" ask />
              <RenkoChart />
            </PanelBody>
          </Panel>
        </SideColumn>
      </Workspace>
      <TradesWindow />
    </Window>
  </React.Fragment>
);

const GlobalStyle = createGlobalStyle`
  * {
    box-sizing: border-box;
  }
  body {
    margin: 0;
    background: #e6e5f0;
    font-family: Verdana, "DejaVu Sans", sans-serif;
    font-size: 11px;
    color: #000;
  }
  button,
  select {
    font: inherit;
    color: inherit;
    padding: 0;
    border: 0;
    background: none;
  }
`;

const Window = styled.div`
  position: relative;
  height: 100vh;
  display: flex;
  flex-direction: column;
  border: 1px solid #1c1c30;
  background: #e6e5f0;
  overflow: hidden;
`;

const TitleBar = styled.div`
  height: 28px;
  flex: none;
  display: flex;
  align-items: center;
  gap: 1px;
  padding: 1px 4px 0 11px;
  border-bottom: 1px solid #9c9cc0;
  background: linear-gradient(#f6f6fa, #e2e2ec 50%, #cfcfde);
`;

const Title = styled.div`
  flex: 1;
  font-weight: bold;
  color: #a0a0b8;
`;

const Detach = styled.button`
  width: 30px;
  height: 20px;
  margin-right: 63px;
  display: flex;
  align-items: center;
  justify-content: center;
  border: 1px solid #70707a;
  border-top: 0;
  border-radius: 0 0 4px 4px;
  background: #eeeef4;
`;

const FrameButton = styled.button`
  width: 19px;
  height: 19px;
  display: flex;
  align-items: center;
  justify-content: center;
  border: 1px solid #c3c3d6;
  border-right-color: #a9a9c6;
  border-bottom-color: #a9a9c6;
  background: linear-gradient(#e9e9f1, #d3d3e2);
  color: #a4a4c4;
`;

const MenuBar = styled.div`
  height: 27px;
  flex: none;
  display: flex;
  align-items: center;
  gap: 15px;
  padding: 0 8px 2px;
  border-top: 1px solid #fff;
  border-bottom: 1px solid #e3e2ea;
  background: #f0eff4;
`;

const MenuButton = styled.button`
  white-space: nowrap;
`;

const Workspace = styled.div`
  flex: 1;
  min-height: 0;
  display: grid;
  grid-template-columns: minmax(0, 1210fr) minmax(0, 466fr);
  gap: 2px;
`;

const SideColumn = styled.div`
  min-height: 0;
  display: grid;
  grid-template-rows: minmax(0, 1fr) minmax(0, 1fr);
  gap: 3px;
`;

const Panel = styled.section`
  min-width: 0;
  min-height: 0;
  display: flex;
  flex-direction: column;
  padding: 0 7px 8px ${(props) => (props.$main ? "6px" : "5px")};
  border-top: 1px solid #a9a8c4;
  ${(props) =>
    props.$main
      ? css`
          border-right: 1px solid #a9a8c4;
        `
      : css`
          border-left: 1px solid #a9a8c4;
        `}
  background: linear-gradient(#f3f2f8, #e4e3ef 32px);
`;

const Strip = styled.div`
  height: 31px;
  flex: none;
  display: flex;
  justify-content: space-between;
  align-items: flex-end;
  margin-right: -7px;
`;

const TabList = styled.div`
  flex: 1;
  display: flex;
  gap: 3px;
  height: 25px;
  border-bottom: 1px solid #c3c1d6;
`;

const StripButtons = styled.div`
  align-self: flex-start;
  display: flex;
  gap: 1px;
  padding: 5px 1px 0 0;
`;

const Tab = styled.div`
  width: ${(props) => props.$width}px;
  height: 25px;
  display: flex;
  align-items: center;
  gap: 9px;
  padding-left: 7px;
  border: 1px solid #c3c1d6;
  border-bottom: 0;
  border-radius: 6px 6px 0 0;
  background: ${(props) => (props.$active ? "#f3f2f8" : "linear-gradient(#f3f2f7, #e9e8f0 50%, #d9d8e4)")};
`;

const TabButton = styled.button`
  height: 100%;
  white-space: nowrap;
`;

const TabClose = styled.button`
  display: flex;
  color: #8886a4;
`;

const PanelBody = styled.div`
  flex: 1;
  min-height: 0;
  display: flex;
  flex-direction: column;
  border-left: 1px solid #b5b3cb;
  background: #fff;
`;

const ToolbarArea = styled.div`
  height: 43px;
  flex: none;
  padding: 3px 0 0 3px;
  background: #f1f0f5;
`;

const ToolbarBox = styled.div`
  width: ${(props) => (props.$full ? "1153px" : "auto")};
  max-width: 100%;
  height: 37px;
  display: flex;
  align-items: center;
  border-top: 1px solid #dfdfe8;
  border-bottom: 2px solid #9c9bb0;
  background: linear-gradient(#fdfdfe, #f0f0f4 45%, #c5c4d2);
  overflow: hidden;
`;

const Grip = styled.span`
  width: 12px;
  height: 100%;
  flex: none;
  margin-right: 4px;
  border-right: 1px solid #d4d4de;
  background: repeating-linear-gradient(90deg, #d4d4de 0 1px, #fafafa 1px 2px) 4px 14px / 5px 9px no-repeat;
`;

const ComboBox = styled.span`
  width: ${(props) => props.$width}px;
  height: 20px;
  flex: none;
  display: grid;
  grid-template-columns: 1fr 14px;
  background: #fff;
`;

const ComboSelect = styled.select`
  grid-area: 1 / 1 / 2 / 3;
  appearance: none;
  padding-left: 3px;
  font-family: Tahoma, "DejaVu Sans Condensed", sans-serif;
  font-size: 12px;
  outline: none;
`;

const ComboArrow = styled.span`
  grid-area: 1 / 2 / 2 / 3;
  display: flex;
  align-items: center;
  justify-content: center;
  background: linear-gradient(#f6f6f9, #d4d4de);
  pointer-events: none;
`;

const LinkGroup = styled.span`
  flex: none;
  display: flex;
  align-items: center;
  padding: 0 3px 0 4px;
`;

const Gap = styled.span`
  width: 4px;
  flex: none;
`;

const Spacer = styled.span`
  flex: 1;
`;

const Separator = styled.span`
  width: 2px;
  height: 34px;
  flex: none;
  margin: 0 2px;
  border-left: 1px solid #cfcfdb;
  border-right: 1px solid #fafafc;
`;

const activeButton = css`
  border-color: #9a7a30;
  background: linear-gradient(#f3a45c, #ffb066 45%, #ff9a3c 50%, #ffa94e);
`;

const ToolButton = styled.button`
  width: 33px;
  height: 32px;
  flex: none;
  margin: 0 1px;
  display: flex;
  align-items: center;
  justify-content: center;
  border: 1px solid transparent;
  ${(props) => props.$active && activeButton}
`;

const PriceButton = styled(ToolButton)`
  font-family: "DejaVu Sans Mono", monospace;
  font-size: 10px;

  span {
    padding-bottom: 1px;
    line-height: 12px;
    border-bottom: 2px solid ${(props) => props.$line};
  }
`;

const TextTool = styled(ToolButton)`
  flex-direction: column;
  justify-content: flex-start;
  padding-top: 2px;
  font-family: "DejaVu Sans Mono", monospace;
  font-size: 9px;
  font-weight: bold;
  line-height: 10px;

  svg {
    margin-left: 6px;
  }
`;

const DropButton = styled.button`
  width: 11px;
  height: 32px;
  flex: none;
  display: flex;
  align-items: center;
  justify-content: center;
`;

const OverflowButton = styled(DropButton)`
  width: 16px;
`;

const Chart = styled.svg`
  display: block;
  flex: 1;
  width: 100%;
  min-height: 0;
  fill: ${LABEL};
  background: #fff;
  shape-rendering: crispEdges;
`;

const Floating = styled.section`
  position: absolute;
  left: -1px;
  bottom: -1px;
  width: 874px;
  height: 182px;
  max-width: 100%;
  display: flex;
  flex-direction: column;
  border: 1px solid #14142a;
  background: #e8e7ef;
`;

const FloatTitle = styled.div`
  height: 28px;
  flex: none;
  display: flex;
  align-items: center;
  justify-content: flex-end;
  gap: 1px;
  padding-right: 4px;
  border-bottom: 1px solid #9c9cc0;
  background: linear-gradient(#f6f6fa, #e2e2ec 50%, #cfcfde);

  button {
    opacity: 0.7;
  }
`;

const FloatMenu = styled.div`
  height: 26px;
  flex: none;
  display: flex;
  align-items: center;
  gap: 14px;
  padding: 0 0 2px 8px;
  border-top: 1px solid #fff;
  border-bottom: 1px solid #dddce6;
  background: #f0eff4;
`;

const Table = styled.table`
  width: 100%;
  table-layout: fixed;
  border-collapse: collapse;
  background: #f3f2f8;
  white-space: nowrap;

  tr {
    height: 22px;
  }
`;

const Col = styled.col`
  width: ${(props) => props.$width}px;
`;

const Th = styled.th`
  height: 22px;
  padding: 3px 0 0;
  font-weight: bold;
  border-bottom: 1px solid #cdccda;
`;

const HeadCell = styled.span`
  height: 14px;
  display: flex;
  align-items: center;
  justify-content: ${(props) => (props.$right ? "flex-end" : "space-between")};
  padding: 0 4px;
  border-right: 1px solid #d6d5e2;
`;

const Row = styled.tr`
  border-bottom: 1px solid #dcdbe6;
  ${(props) =>
    props.$selected &&
    css`
      border-bottom-color: #8a88a0;
      background: linear-gradient(#e9e8f1, #c9c7d6 60%, #aeacc0);
    `}
`;

const TotalRow = styled.tr`
  border-bottom: 1px solid #b4c8e0;
  background: linear-gradient(#e6f3ff, #d0e6ff);
`;

const Td = styled.td`
  padding: 0 3px 0 5px;
  text-align: ${(props) => (props.$right ? "right" : "left")};
`;

const StatusBar = styled.div`
  height: 27px;
  flex: none;
  display: flex;
  align-items: flex-end;
  justify-content: flex-end;
  margin: 6px 4px 0 1px;
  padding: 3px;
  border: 1px solid #d3d2de;
  background: linear-gradient(#f7f7f9, #efeff3);
`;

export default App;
